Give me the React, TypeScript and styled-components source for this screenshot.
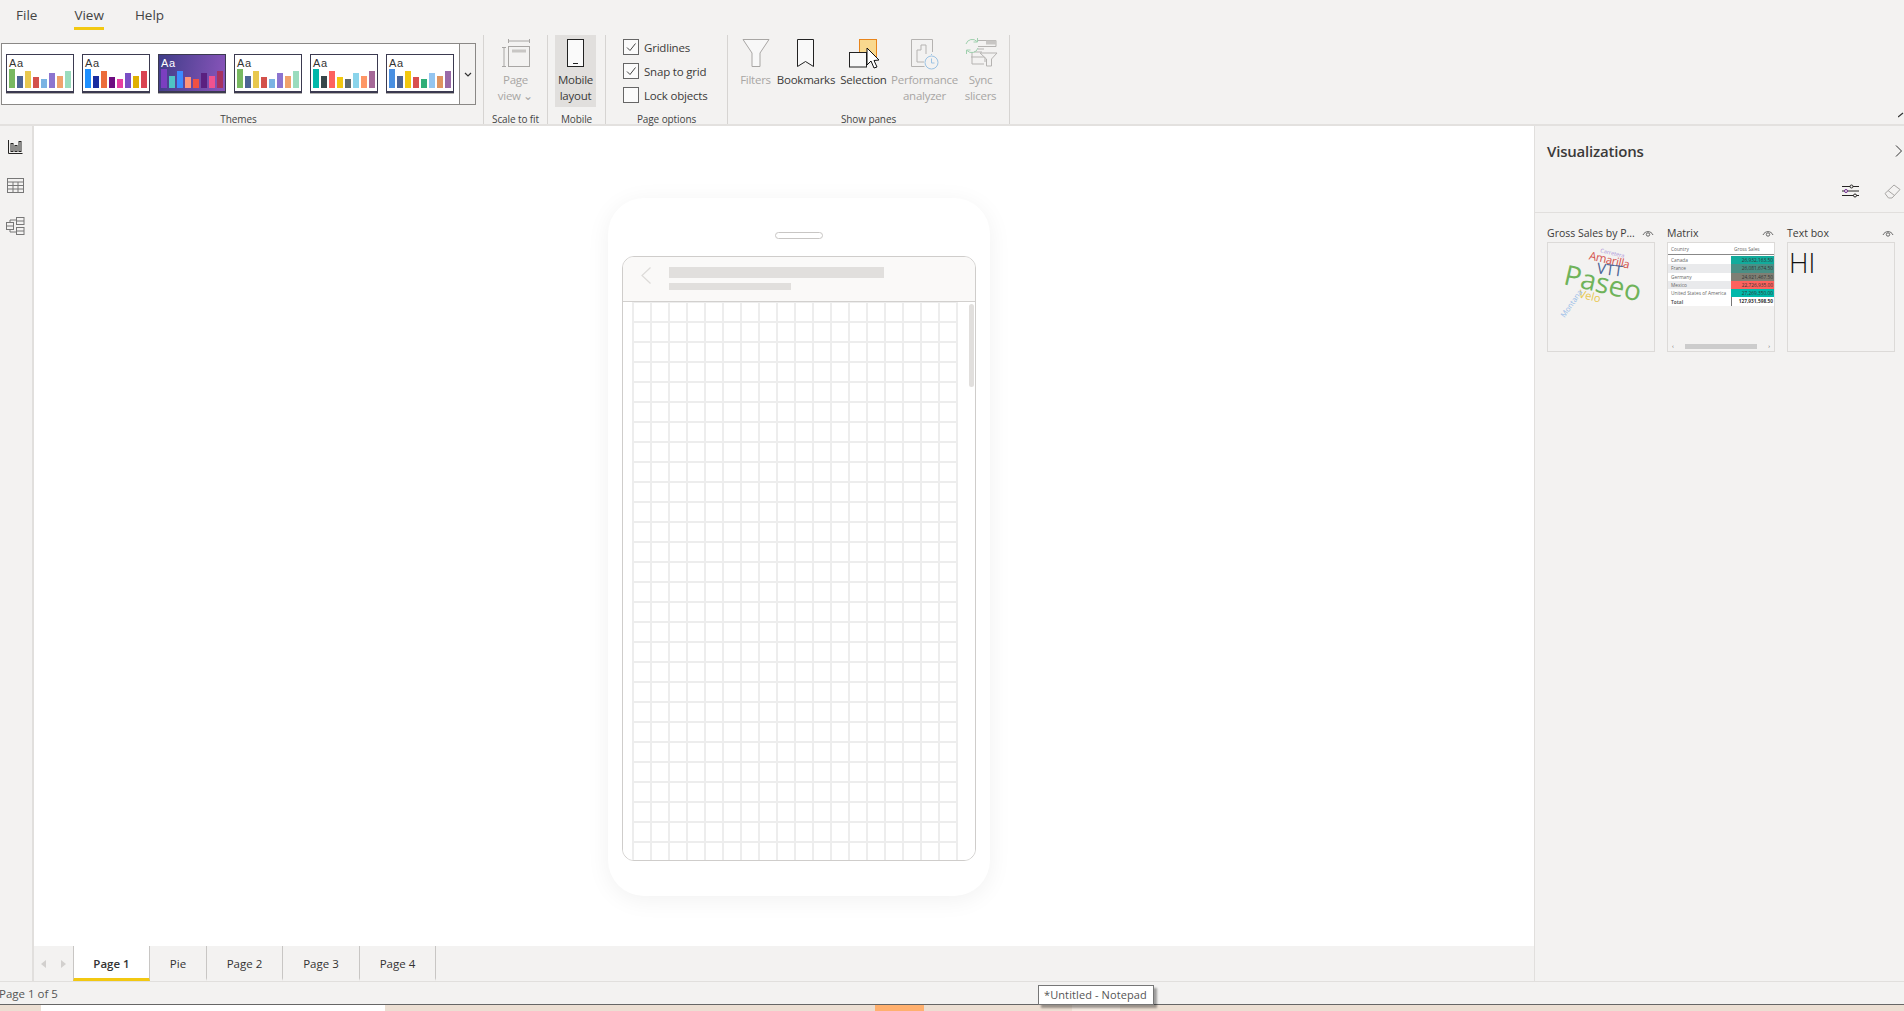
import React from "react";
import styled, { createGlobalStyle } from "styled-components";

const GlobalStyle = createGlobalStyle`
  html, body {
    margin: 0;
    padding: 0;
    height: 100%;
    overflow: hidden;
    background: #f3f2f1;
    font-family: "Open Sans", "Noto Sans", "Liberation Sans", sans-serif;
    color: #333;
  }
  * { box-sizing: border-box; }
`;

const Page = styled.div`
  position: relative;
  width: 1904px;
  height: 1011px;
  display: flex;
  flex-direction: column;
  overflow: hidden;
`;

/* ribbon */
const Ribbon = styled.div`
  height: 126px;
  flex: none;
  display: flex;
  flex-direction: column;
  position: relative;
  border-bottom: 2px solid #e3e1df;
`;

const MenuBar = styled.div`
  height: 35px;
  flex: none;
  display: flex;
  padding-left: 16px;
`;

const MenuItem = styled.div<{ $active?: boolean; $mr?: number }>`
  height: 30px;
  padding-top: 6px;
  margin-right: ${(p) => p.$mr ?? 0}px;
  font-size: 13.5px;
  line-height: 18px;
  color: #444;
  border-bottom: 3px solid ${(p) => (p.$active ? "#f2c811" : "transparent")};
`;

const GroupRow = styled.div`
  height: 89px;
  display: flex;
`;

const Group = styled.div<{ $w: number }>`
  width: ${(p) => p.$w}px;
  flex: none;
  display: flex;
  flex-direction: column;
  border-right: 1px solid #d6d4d2;
`;

const GroupBody = styled.div`
  flex: 1;
  display: flex;
  min-height: 0;
`;

const GroupLabel = styled.div<{ $pr?: number }>`
  height: 11px;
  padding-right: ${(p) => p.$pr ?? 0}px;
  font-size: 10px;
  line-height: 13px;
  text-align: center;
  color: #444;
  letter-spacing: -0.1px;
  white-space: nowrap;
`;

const Gallery = styled.div`
  width: 475px;
  height: 62px;
  margin: 8px 0 0 1px;
  display: flex;
  background: #fff;
  border: 1px solid #8a8886;
`;

const GalleryItems = styled.div`
  flex: 1;
  display: flex;
  gap: 8px;
  padding: 10px 0 0 4px;
`;

const GalleryMore = styled.div`
  width: 16px;
  flex: none;
  display: flex;
  align-items: center;
  justify-content: center;
  background: #f3f2f1;
  border-left: 1px solid #8a8886;
`;

const Thumb = styled.div<{ $dark?: boolean }>`
  width: 68px;
  height: 39px;
  flex: none;
  padding: 2px 0 3px 2px;
  display: flex;
  flex-direction: column;
  border: 1px solid #3b3a50;
  border-bottom: 2px solid #3b3a50;
  background: ${(p) => (p.$dark ? "linear-gradient(100deg, #3f3d88, #8a55bb)" : "#fff")};
  color: ${(p) => (p.$dark ? "#fff" : "#333")};
  font-family: "Liberation Sans", sans-serif;
  font-size: 11px;
  line-height: 12px;
  letter-spacing: 0.6px;
  box-shadow: 0 1px 0 #b5b3b1;
`;

const ThumbBars = styled.div`
  flex: 1;
  display: flex;
  align-items: flex-end;
  gap: 2px;
`;

const ThumbBar = styled.div<{ $h: number; $c: string }>`
  width: 6px;
  height: ${(p) => p.$h}px;
  background: ${(p) => p.$c};
`;

const ToolButton = styled.div<{ $w: number; $active?: boolean; $muted?: boolean }>`
  width: ${(p) => p.$w}px;
  height: 72px;
  flex: none;
  display: flex;
  flex-direction: column;
  align-items: center;
  padding-top: 4px;
  background: ${(p) => (p.$active ? "#e1dfdd" : "transparent")};
  color: ${(p) => (p.$muted ? "#a8a6a4" : "#3b3a39")};
  font-size: 11.5px;
  line-height: 16px;
  letter-spacing: -0.25px;
  text-align: center;
  white-space: nowrap;
  svg { flex: none; overflow: visible; }
`;

const ToolText = styled.div`
  margin-top: 5px;
`;

const ButtonStrip = styled.div<{ $pad: number }>`
  display: flex;
  padding-left: ${(p) => p.$pad}px;
`;

const CheckList = styled.div`
  display: flex;
  flex-direction: column;
  padding-left: 17px;
`;

const CheckRow = styled.div`
  height: 24.2px;
  display: flex;
  align-items: center;
  gap: 5px;
  font-size: 11.5px;
  letter-spacing: -0.2px;
  color: #3b3a39;
`;

const CheckBox = styled.div`
  width: 16px;
  height: 16px;
  border: 1px solid #666;
  background: #fbfbfb;
  display: flex;
  align-items: center;
  justify-content: center;
`;

const Collapse = styled.svg`
  position: absolute;
  right: 0;
  bottom: 6px;
`;

/* main area */
const Main = styled.div`
  flex: 1;
  min-height: 0;
  display: flex;
  border-bottom: 1px solid #e1dfdd;
`;

const Rail = styled.div`
  width: 34px;
  flex: none;
  display: flex;
  flex-direction: column;
  align-items: center;
  padding: 14px 2px 0 0;
  gap: 24px;
  border-right: 2px solid #e1dfdd;
`;

const Center = styled.div`
  flex: 1;
  min-width: 0;
  display: flex;
  flex-direction: column;
`;

const Canvas = styled.div`
  flex: 1;
  min-height: 0;
  background: #fff;
  padding: 72px 0 0 574px;
`;

const Phone = styled.div`
  width: 382px;
  height: 698px;
  padding: 34px 14px 35px;
  display: flex;
  flex-direction: column;
  align-items: center;
  background: #fff;
  border-radius: 36px;
  box-shadow: 0 4px 24px rgba(0, 0, 0, 0.06);
`;

const Speaker = styled.div`
  width: 48px;
  height: 7px;
  flex: none;
  border: 1px solid #c8c6c4;
  border-radius: 4px;
  margin-bottom: 17px;
`;

const Screen = styled.div`
  width: 354px;
  flex: 1;
  min-height: 0;
  display: flex;
  flex-direction: column;
  border: 1px solid #cfcdcb;
  border-radius: 12px;
  overflow: hidden;
`;

const ScreenHead = styled.div`
  height: 45px;
  flex: none;
  display: flex;
  align-items: flex-start;
  padding: 10px 0 0 18px;
  gap: 17px;
  background: #faf9f8;
  border-bottom: 1px solid #d2d0ce;
`;

const HeadBars = styled.div`
  display: flex;
  flex-direction: column;
  gap: 5px;
`;

const HeadBar = styled.div<{ $w: number; $h: number }>`
  width: ${(p) => p.$w}px;
  height: ${(p) => p.$h}px;
  background: #e1dfdd;
`;

const ScreenBody = styled.div`
  flex: 1;
  min-height: 0;
  display: flex;
  padding-left: 9px;
  background: #fff;
`;

const GridArea = styled.div`
  width: 326px;
  flex: none;
  background-image:
    linear-gradient(to right, #ededed 2px, transparent 2px),
    linear-gradient(to bottom, #ededed 2px, transparent 2px);
  background-size: 18px 20px;
  background-position: 0 -1px;
`;

const ScrollThumb = styled.div`
  width: 5px;
  height: 83px;
  margin: 2px 0 0 11px;
  border-radius: 3px;
  background: #e1dfdd;
`;

const TabBar = styled.div`
  height: 35px;
  flex: none;
  display: flex;
`;

const TabArrows = styled.div`
  width: 39px;
  flex: none;
  display: flex;
  align-items: center;
  justify-content: center;
  gap: 14px;
`;

const Tab = styled.div<{ $w: number; $active?: boolean }>`
  width: ${(p) => p.$w}px;
  flex: none;
  display: flex;
  align-items: center;
  justify-content: center;
  font-size: 11.5px;
  padding-top: 3px;
  font-weight: ${(p) => (p.$active ? 600 : 400)};
  color: #333;
  background: ${(p) => (p.$active ? "#fff" : "transparent")};
  border-right: 1px solid #c8c6c4;
  border-left: ${(p) => (p.$active ? "1px solid #c8c6c4" : "none")};
  border-bottom: 3px solid ${(p) => (p.$active ? "#f2c811" : "transparent")};
`;

/* visualizations pane */
const Pane = styled.div`
  width: 370px;
  flex: none;
  display: flex;
  flex-direction: column;
  border-left: 1px solid #e1dfdd;
`;

const PaneHead = styled.div`
  height: 87px;
  flex: none;
  display: flex;
  flex-direction: column;
  padding: 13px 0 0 12px;
  border-bottom: 1px solid #e1dfdd;
`;

const PaneTitleRow = styled.div`
  display: flex;
  align-items: center;
  justify-content: space-between;
  padding-right: 2px;
`;

const PaneTitle = styled.div`
  font-size: 15px;
  line-height: 24px;
  font-weight: 600;
  letter-spacing: -0.2px;
  color: #3b3a39;
`;

const PaneTools = styled.div`
  display: flex;
  justify-content: flex-end;
  gap: 25px;
  margin-top: 21px;
  padding-right: 3px;
`;

const CardRow = styled.div`
  display: flex;
  gap: 12px;
  padding: 11px 0 0 12px;
`;

const Card = styled.div`
  width: 108px;
  flex: none;
`;

const CardHead = styled.div`
  height: 18px;
  padding-bottom: 1px;
  display: flex;
  align-items: center;
  justify-content: space-between;
  font-size: 10.5px;
  color: #3b3a39;
  padding-right: 1px;
  white-space: nowrap;
`;

const CardBox = styled.div`
  position: relative;
  height: 110px;
  border: 1px solid #dcdad8;
`;

const Word = styled.span<{ $x: number; $y: number; $size: number; $rot: number; $c: string; $ls?: number }>`
  position: absolute;
  left: ${(p) => p.$x}px;
  top: ${(p) => p.$y}px;
  font-size: ${(p) => p.$size}px;
  line-height: 1;
  letter-spacing: ${(p) => p.$ls ?? 0}px;
  color: ${(p) => p.$c};
  transform: rotate(${(p) => p.$rot}deg);
  white-space: nowrap;
`;

const Matrix = styled.div`
  display: flex;
  flex-direction: column;
  background: #fff;
  font-size: 4.8px;
  color: #666;
`;

const MatrixHead = styled.div`
  height: 12px;
  display: grid;
  grid-template-columns: 63px 1fr;
  align-items: center;
  padding-left: 3px;
  border-bottom: 1px solid #888;
  margin-bottom: 1px;
`;

const MatrixRow = styled.div<{ $alt?: boolean; $bold?: boolean }>`
  height: 8.3px;
  display: grid;
  grid-template-columns: 60px 1fr;
  align-items: center;
  padding-left: 3px;
  background: ${(p) => (p.$alt ? "#e9eaec" : "#fff")};
  font-weight: ${(p) => (p.$bold ? 700 : 400)};
  white-space: nowrap;
`;

const MatrixValue = styled.div<{ $c?: string }>`
  height: 100%;
  line-height: 8.3px;
  text-align: right;
  padding-right: 1px;
  color: #333;
  background: ${(p) => p.$c ?? "#fff"};
  border-left: 1px solid ${(p) => (p.$c ? "transparent" : "#777")};
`;

const MatrixScroll = styled.div`
  position: absolute;
  left: 4px;
  right: 4px;
  bottom: 2px;
  height: 6px;
  display: flex;
  align-items: center;
  justify-content: space-between;
  font-size: 6px;
  line-height: 6px;
  color: #666;
`;

const MatrixThumb = styled.div`
  width: 72px;
  height: 5px;
  background: #ccc;
`;

const BigText = styled.div`
  font-size: 27px;
  font-weight: 300;
  line-height: 34px;
  padding: 3px 0 0 1px;
  color: #111;
`;

/* bottom */
const StatusBar = styled.div`
  height: 22px;
  flex: none;
  font-size: 11.5px;
  line-height: 23px;
  color: #555;
  margin-left: -1px;
  white-space: nowrap;
`;

const Taskbar = styled.div`
  height: 7px;
  flex: none;
  display: flex;
  background: #ecdfd3;
  border-top: 1px solid #666;
`;

const TaskSlot = styled.div<{ $ml: number; $w: number; $c: string }>`
  margin-left: ${(p) => p.$ml}px;
  width: ${(p) => p.$w}px;
  background: ${(p) => p.$c};
`;

const Tooltip = styled.div`
  position: absolute;
  left: 1038px;
  top: 985px;
  width: 116px;
  height: 20px;
  border: 1px solid #767676;
  background: #fff;
  font-size: 11px;
  line-height: 18px;
  letter-spacing: 0.1px;
  padding-left: 5px;
  color: #555;
  white-space: nowrap;
  box-shadow: 3px 3px 2px rgba(0, 0, 0, 0.35);
`;

const themes = [
  { bars: ["#78b861", "#4d6496", "#e8c84f", "#d3514b", "#7ab3e3", "#8c74cf", "#f0a26b", "#9adcbd"] },
  { bars: ["#1e90ff", "#1a2da0", "#ec6c3a", "#6e0d80", "#e63fa0", "#7a4fc5", "#e0b000", "#da4352"] },
  { bars: ["#7b3fc0", "#4fc4c4", "#3d8bff", "#ff9478", "#ef5043", "#5a2080", "#f0528f", "#a6325f"], dark: true },
  { bars: ["#78b861", "#4d6496", "#e8c84f", "#d3514b", "#7ab3e3", "#8c74cf", "#f0a26b", "#9adcbd"] },
  { bars: ["#00b8a9", "#374649", "#fd625e", "#f2c80f", "#5f6b6d", "#8ad4eb", "#fe9666", "#a66999"] },
  { bars: ["#4a90e2", "#4d6496", "#f2c80f", "#d84f4f", "#2fae79", "#94c5f0", "#e09460", "#9a6aa8"] },
];
const barHeights = [19, 12, 17, 11, 9, 15, 12, 17];

const matrixRows = [
  { name: "Canada", value: "26,932,163.50", color: "#12ab9c" },
  { name: "France", value: "26,081,674.50", color: "#4a8f85", alt: true },
  { name: "Germany", value: "24,921,467.50", color: "#7f7f74" },
  { name: "Mexico", value: "22,726,935.00", color: "#fd625e", alt: true },
  { name: "United States of America", value: "27,269,350.00", color: "#01b8aa" },
];

const Eye = () => (
  <svg width="12" height="8" viewBox="0 0 12 8" fill="none" stroke="#666" strokeWidth="1">
    <path d="M1 6 C3 1.5 9 1.5 11 6" />
    <circle cx="6" cy="5.5" r="1.7" />
  </svg>
);

const Tick = () => (
  <svg width="12" height="12" viewBox="0 0 12 12" fill="none" stroke="#444" strokeWidth="1">
    <path d="M2 6.5 L5 9.5 L10.5 2.5" />
  </svg>
);

const PageViewIcon = () => (
  <svg width="28" height="28" viewBox="0 0 28 28" fill="none" stroke="#a8a6a4">
    <path d="M6.5 0v4M27.5 0v4M6.5 2h21" />
    <rect x="6.5" y="7.5" width="21" height="20" />
    <rect x="10" y="10.5" width="14" height="3" fill="#c8c6c4" stroke="none" />
    <path d="M0 8.5h4M0 27.5h4M2 8.5v19" />
  </svg>
);

const MobileIcon = () => (
  <svg width="18" height="28" viewBox="0 0 18 28" fill="#fafafa" stroke="#222">
    <rect x="0.5" y="0.5" width="16" height="27" />
    <path d="M6 24.5h5" />
  </svg>
);

const FilterIcon = () => (
  <svg width="28" height="28" viewBox="0 0 28 28" fill="#f8f8f8" stroke="#a8a6a4">
    <path d="M1 .5h26L18 14v13.5h-8V14z" />
  </svg>
);

const BookmarkIcon = () => (
  <svg width="18" height="28" viewBox="0 0 18 28" fill="#f9f9f9" stroke="#222">
    <path d="M.5.5h16v27l-8-5-8 5z" />
  </svg>
);

const SelectionIcon = () => (
  <svg width="30" height="28" viewBox="0 0 30 28">
    <rect x="10.5" y="0.5" width="17" height="20" fill="#f9d98e" stroke="#e8851c" />
    <rect x="0.5" y="13.5" width="17" height="14.5" fill="#f8f8f8" stroke="#222" />
    <path d="M18 9 L18 26 L22 22 L25 29 L28 28 L25 21.5 L30 21 Z" fill="#fff" stroke="#111" />
  </svg>
);

const PerfIcon = () => (
  <svg width="28" height="28" viewBox="0 0 28 28" fill="none" stroke="#b5b3b1">
    <path d="M21.5 13V.5H.5v27h13" />
    <path d="M6 23V11h4V6h5v9M6 23h7" />
    <circle cx="20.5" cy="23.5" r="6.5" fill="#f3f2f1" stroke="#9cc3e4" />
    <path d="M20.5 19.5v4.5h3M20.5 15v1" stroke="#9cc3e4" />
  </svg>
);

const SyncIcon = () => (
  <svg width="34" height="28" viewBox="0 2 34 28" fill="none" stroke="#b5b3b1">
    <path d="M14 3.5h18v6H14M18 15H10M8 15v12h12" />
    <path d="M14 12h6M7 20h14v5" />
    <path d="M16 16h17l-5.5 6v7h-5v-7z" fill="#f3f2f1" />
    <rect x="22" y="3.5" width="10" height="4" fill="#c8c6c4" stroke="none" />
    <path d="M2 7a6.5 6.5 0 0 1 11-2.5M14 11a6.5 6.5 0 0 1-11 2.5M13.5 1v4h-4M2.5 17v-4h4" stroke="#9fd0ae" />
  </svg>
);

const ReportIcon = () => (
  <svg width="15" height="14" viewBox="0 0 15 14" fill="none" stroke="#252423">
    <path d="M.5 0v13.5h14" />
    <rect x="3" y="3.5" width="2" height="8" />
    <rect x="7" y="5.5" width="2" height="6" />
    <rect x="11" y="1.5" width="2" height="10" />
  </svg>
);

const DataIcon = () => (
  <svg width="17" height="15" viewBox="0 0 17 15" fill="none" stroke="#777">
    <rect x="0.5" y="0.5" width="16" height="14" />
    <path d="M.5 4h16M.5 7.5h16M.5 11h16M6 4v10.5M11 4v10.5" />
  </svg>
);

const ModelIcon = () => (
  <svg width="19" height="18" viewBox="0 0 19 18" fill="none" stroke="#777">
    <rect x="0.5" y="5.5" width="7" height="7" />
    <rect x="10.5" y="0.5" width="7.5" height="7" />
    <rect x="10.5" y="10.5" width="7.5" height="7" />
    <path d="M.5 9h7M4 5.5V3h6.5M4 12.5V15h6.5M10.5 4h7.5M10.5 14h7.5" />
  </svg>
);

const SlidersIcon = () => (
  <svg width="17" height="14" viewBox="0 0 17 14" fill="#f3f2f1" stroke="#252423">
    <path d="M0 2.5h17M0 7h17M0 11.5h17" />
    <circle cx="9.5" cy="2.5" r="1.5" />
    <circle cx="4" cy="7" r="1.5" stroke="#6e2a8c" />
    <circle cx="13" cy="11.5" r="1.5" />
  </svg>
);

const EraserIcon = () => (
  <svg width="17" height="15" viewBox="0 0 17 15" fill="none" stroke="#a8a6a4">
    <path d="M1 9.5 10 1l6 4.5-8 8.5H4.5z" />
    <path d="M4 6.5l6.5 5" />
  </svg>
);

export default function App() {
  return (
    <Page>
      <GlobalStyle />
      <Ribbon>
        <MenuBar>
          <MenuItem $mr={37}>File</MenuItem>
          <MenuItem $active $mr={31}>
            View
          </MenuItem>
          <MenuItem>Help</MenuItem>
        </MenuBar>
        <GroupRow>
          <Group $w={484}>
            <GroupBody>
              <Gallery>
                <GalleryItems>
                  {themes.map((t, i) => (
                    <Thumb key={i} $dark={t.dark}>
                      Aa
                      <ThumbBars>
                        {t.bars.map((c, j) => (
                          <ThumbBar key={j} $c={c} $h={barHeights[j]} />
                        ))}
                      </ThumbBars>
                    </Thumb>
                  ))}
                </GalleryItems>
                <GalleryMore>
                  <svg width="8" height="5" viewBox="0 0 8 5" fill="none" stroke="#333" strokeWidth="1.2">
                    <path d="M1 1l3 3 3-3" />
                  </svg>
                </GalleryMore>
              </Gallery>
            </GroupBody>
            <GroupLabel $pr={6}>Themes</GroupLabel>
          </Group>
          <Group $w={64}>
            <GroupBody>
              <ToolButton $w={63} $muted>
                <PageViewIcon />
                <ToolText>
                  Page
                  <br />
                  view ⌄
                </ToolText>
              </ToolButton>
            </GroupBody>
            <GroupLabel>Scale to fit</GroupLabel>
          </Group>
          <Group $w={58}>
            <GroupBody>
              <ButtonStrip $pad={7}>
                <ToolButton $w={41} $active>
                  <MobileIcon />
                  <ToolText>
                    Mobile
                    <br />
                    layout
                  </ToolText>
                </ToolButton>
              </ButtonStrip>
            </GroupBody>
            <GroupLabel>Mobile</GroupLabel>
          </Group>
          <Group $w={122}>
            <GroupBody>
              <CheckList>
                <CheckRow>
                  <CheckBox>
                    <Tick />
                  </CheckBox>
                  Gridlines
                </CheckRow>
                <CheckRow>
                  <CheckBox>
                    <Tick />
                  </CheckBox>
                  Snap to grid
                </CheckRow>
                <CheckRow>
                  <CheckBox />
                  Lock objects
                </CheckRow>
              </CheckList>
            </GroupBody>
            <GroupLabel>Page options</GroupLabel>
          </Group>
          <Group $w={282}>
            <GroupBody>
              <ButtonStrip $pad={10}>
                <ToolButton $w={35} $muted>
                  <FilterIcon />
                  <ToolText>Filters</ToolText>
                </ToolButton>
                <ToolButton $w={66}>
                  <BookmarkIcon />
                  <ToolText>Bookmarks</ToolText>
                </ToolButton>
                <ToolButton $w={49}>
                  <SelectionIcon />
                  <ToolText>Selection</ToolText>
                </ToolButton>
                <ToolButton $w={73} $muted>
                  <PerfIcon />
                  <ToolText>
                    Performance
                    <br />
                    analyzer
                  </ToolText>
                </ToolButton>
                <ToolButton $w={39} $muted>
                  <SyncIcon />
                  <ToolText>
                    Sync
                    <br />
                    slicers
                  </ToolText>
                </ToolButton>
              </ButtonStrip>
            </GroupBody>
            <GroupLabel>Show panes</GroupLabel>
          </Group>
        </GroupRow>
        <Collapse width="6" height="6" viewBox="0 0 6 6" fill="none" stroke="#333" strokeWidth="1.2">
          <path d="M0 5l5-4" />
        </Collapse>
      </Ribbon>

      <Main>
        <Rail>
          <ReportIcon />
          <DataIcon />
          <ModelIcon />
        </Rail>
        <Center>
          <Canvas>
            <Phone>
              <Speaker />
              <Screen>
                <ScreenHead>
                  <svg width="11" height="17" viewBox="0 0 11 17" fill="none" stroke="#dddbd9" strokeWidth="1.2">
                    <path d="M9.5 .5L1 8.5l8.5 8" />
                  </svg>
                  <HeadBars>
                    <HeadBar $w={215} $h={11} />
                    <HeadBar $w={122} $h={7} />
                  </HeadBars>
                </ScreenHead>
                <ScreenBody>
                  <GridArea />
                  <ScrollThumb />
                </ScreenBody>
              </Screen>
            </Phone>
          </Canvas>
          <TabBar>
            <TabArrows>
              <svg width="6" height="8" viewBox="0 0 6 8" fill="#d2d0ce">
                <path d="M5 0v8L0 4z" />
              </svg>
              <svg width="6" height="8" viewBox="0 0 6 8" fill="#d2d0ce">
                <path d="M0 0v8l5-4z" />
              </svg>
            </TabArrows>
            <Tab $w={77} $active>
              Page 1
            </Tab>
            <Tab $w={57}>Pie</Tab>
            <Tab $w={76}>Page 2</Tab>
            <Tab $w={77}>Page 3</Tab>
            <Tab $w={76}>Page 4</Tab>
          </TabBar>
        </Center>
        <Pane>
          <PaneHead>
            <PaneTitleRow>
              <PaneTitle>Visualizations</PaneTitle>
              <svg width="7" height="12" viewBox="0 0 7 12" fill="none" stroke="#333">
                <path d="M1 .5L6.5 6 1 11.5" />
              </svg>
            </PaneTitleRow>
            <PaneTools>
              <SlidersIcon />
              <EraserIcon />
            </PaneTools>
          </PaneHead>
          <CardRow>
            <Card>
              <CardHead>
                Gross Sales by P...
                <Eye />
              </CardHead>
              <CardBox>
                <Word $x={52} $y={8} $size={5.5} $rot={13} $c="#a890d8">Carretera</Word>
                <Word $x={41} $y={11} $size={11.5} $rot={13} $ls={-0.4} $c="#d3514b">Amarilla</Word>
                <Word $x={49} $y={19} $size={15} $rot={8} $c="#4d6496">VTT</Word>
                <Word $x={16} $y={25} $size={28} $rot={13} $c="#6fb35a">Paseo</Word>
                <Word $x={31} $y={47} $size={11} $rot={14} $c="#e8c84f">Velo</Word>
                <Word $x={8} $y={57} $size={7.5} $rot={-55} $c="#98bce8">Montana</Word>
              </CardBox>
            </Card>
            <Card>
              <CardHead>
                Matrix
                <Eye />
              </CardHead>
              <CardBox>
                <Matrix>
                  <MatrixHead>
                    <span>Country</span>
                    <span>Gross Sales</span>
                  </MatrixHead>
                  {matrixRows.map((r) => (
                    <MatrixRow key={r.name} $alt={r.alt}>
                      <span>{r.name}</span>
                      <MatrixValue $c={r.color}>{r.value}</MatrixValue>
                    </MatrixRow>
                  ))}
                  <MatrixRow $bold>
                    <span>Total</span>
                    <MatrixValue>127,931,598.50</MatrixValue>
                  </MatrixRow>
                </Matrix>
                <MatrixScroll>
                  <span>‹</span>
                  <MatrixThumb />
                  <span>›</span>
                </MatrixScroll>
              </CardBox>
            </Card>
            <Card>
              <CardHead>
                Text box
                <Eye />
              </CardHead>
              <CardBox>
                <BigText>HI</BigText>
              </CardBox>
            </Card>
          </CardRow>
        </Pane>
      </Main>

      <StatusBar>Page 1 of 5</StatusBar>
      <Taskbar>
        <TaskSlot $ml={41} $w={344} $c="#fff" />
        <TaskSlot $ml={490} $w={49} $c="#ffb06e" />
        <TaskSlot $ml={148} $w={48} $c="#f5ebe2" />
      </Taskbar>
      <Tooltip>*Untitled - Notepad</Tooltip>
    </Page>
  );
}
